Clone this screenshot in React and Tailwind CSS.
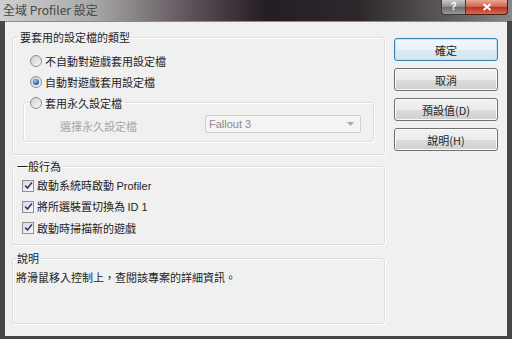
import React from 'react';

const Radio = ({ checked }) => (
  <span className="w-[12px] h-[12px] rounded-full border border-[#8f8f8f] bg-[linear-gradient(135deg,#cdcdcd,#f9f9f9)] flex items-center justify-center shrink-0">
    {checked && <span className="w-[6px] h-[6px] rounded-full bg-[radial-gradient(circle_at_40%_35%,#9fd0f5,#1d4f9a_70%)]" />}
  </span>
);

const Check = () => (
  <span className="w-[12px] h-[12px] border border-[#8f8f8f] bg-[linear-gradient(135deg,#dadada,#fbfbfb)] flex items-center justify-center shrink-0">
    <svg width="9" height="9" viewBox="0 0 9 9">
      <path d="M1.2 4.6 L3.5 7 L7.9 1.6" stroke="#23407a" strokeWidth="1.6" fill="none" />
    </svg>
  </span>
);

const Button = ({ children, primary }) => (
  <button
    className={
      primary
        ? 'h-[23px] w-full rounded-[3px] border border-[#3c7fb1] bg-[linear-gradient(#f3f8fb_0%,#e9f2f8_50%,#dceaf3_51%,#d3e5f0_100%)] shadow-[inset_0_0_0_1px_#bfe3f8] text-[11px] text-[#1e1e1e]'
        : 'h-[23px] w-full rounded-[3px] border border-[#707070] bg-[linear-gradient(#f2f2f2_0%,#ebebeb_50%,#dddddd_51%,#cfcfcf_100%)] shadow-[inset_0_0_0_1px_#fbfbfb] text-[11px] text-[#1e1e1e]'
    }
  >
    {children}
  </button>
);

const groupCls =
  'rounded-[3px] border border-[#dedede] shadow-[inset_1px_1px_0_#ffffff,1px_1px_0_#ffffff]';

export default function App() {
  return (
    <div className="w-[512px] h-[339px] flex flex-col overflow-hidden bg-[#48454a] font-['Noto_Sans_CJK_TC',sans-serif] leading-[14px] text-[#1e1e1e]">
      {/* title bar */}
      <div className="h-[21px] flex items-start justify-between bg-[linear-gradient(90deg,#cfcfcf_0%,#a9a9a9_18%,#5a4f57_38%,#241d23_52%,#2e282d_70%,#5f5b5e_88%,#8a8789_100%)]">
        <span className="pl-[3px] pt-[3px] text-[12px] text-[#474747]">全域 Profiler 設定</span>
        <div className="flex mr-[4px]">
          <div className="w-[25px] h-[15px] rounded-bl-[4px] border border-t-0 border-[#3a3a3a] bg-[linear-gradient(#c9c9c9,#8c8c8c_50%,#6a6a6a_51%,#9a9a9a)] flex items-center justify-center text-white text-[10px] font-bold font-['Liberation_Sans',sans-serif]">?</div>
          <div className="w-[42px] h-[15px] rounded-br-[4px] border border-l-0 border-t-0 border-[#4a1d19] bg-[linear-gradient(#e8a898,#d0604c_50%,#b83320_51%,#d86a50)] flex items-center justify-center">
            <svg width="10" height="8" viewBox="0 0 10 8">
              <path d="M1.5 1 L8.5 7 M8.5 1 L1.5 7" stroke="#fff" strokeWidth="2" />
            </svg>
          </div>
        </div>
      </div>

      {/* client */}
      <div className="ml-[5px] w-[502px] h-[315px] bg-[#f0f0f0] border-t border-[#8a8a8a] flex pl-[7px] pt-[8px]">
        <div className="w-[373px] flex flex-col">
          <fieldset className={`${groupCls} pb-[12px]`}>
            <legend className="ml-[5px] px-[2px] text-[11px]">要套用的設定檔的類型</legend>
            <div className="pl-[17px] pt-[6px] flex flex-col text-[11px]">
              <div className="h-[21px] flex items-center gap-[3px]"><Radio /><span>不自動對遊戲套用設定檔</span></div>
              <div className="h-[21px] flex items-center gap-[3px]"><Radio checked /><span>自動對遊戲套用設定檔</span></div>
            </div>
            <fieldset className={`${groupCls} ml-[10px] mr-[10px] pb-[6px]`}>
              <legend className="ml-[6px] pr-[2px] h-[21px] flex items-center gap-[3px] text-[11px]">
                <Radio /><span>套用永久設定檔</span>
              </legend>
              <div className="h-[22px] flex items-center pl-[36px] text-[11px]">
                <span className="w-[145px] text-[#a6a6a6] pt-[4px]">選擇永久設定檔</span>
                <div className="w-[156px] h-[18px] border border-[#cfcfcf] rounded-[2px] bg-[#f4f4f4] flex items-center justify-between pl-[3px] pr-[6px]">
                  <span className="text-[#8c8c8c] font-['Liberation_Sans',sans-serif] text-[11px]">Fallout 3</span>
                  <svg width="7" height="4" viewBox="0 0 7 4"><path d="M0 0 H7 L3.5 4 Z" fill="#a8a8a8" /></svg>
                </div>
              </div>
            </fieldset>
          </fieldset>

          <fieldset className={`${groupCls} mt-[4px] pb-[6px]`}>
            <legend className="ml-[3px] px-[1px] text-[11px]">一般行為</legend>
            <div className="pl-[9px] pt-[2px] flex flex-col text-[11px]">
              <div className="h-[21px] flex items-center gap-[3px]"><Check /><span>啟動系統時啟動 <span className="font-['Liberation_Sans',sans-serif]">Profiler</span></span></div>
              <div className="h-[21px] flex items-center gap-[3px]"><Check /><span>將所選裝置切換為 <span className="font-['Liberation_Sans',sans-serif]">ID 1</span></span></div>
              <div className="h-[21px] flex items-center gap-[3px]"><Check /><span>啟動時掃描新的遊戲</span></div>
            </div>
          </fieldset>

          <fieldset className={`${groupCls} mt-[6px] h-[73px]`}>
            <legend className="ml-[3px] px-[1px] text-[11px]">說明</legend>
            <div className="pl-[3px] pt-[3px] h-[21px] flex items-center text-[11px]">
              將滑鼠移入控制上，查閱該專案的詳細資訊。
            </div>
          </fieldset>
        </div>

        <div className="ml-[9px] w-[104px] pt-[8px] flex flex-col gap-[7px]">
          <Button primary>確定</Button>
          <Button>取消</Button>
          <Button>預設值(D)</Button>
          <Button>說明(H)</Button>
        </div>
      </div>
    </div>
  );
}
